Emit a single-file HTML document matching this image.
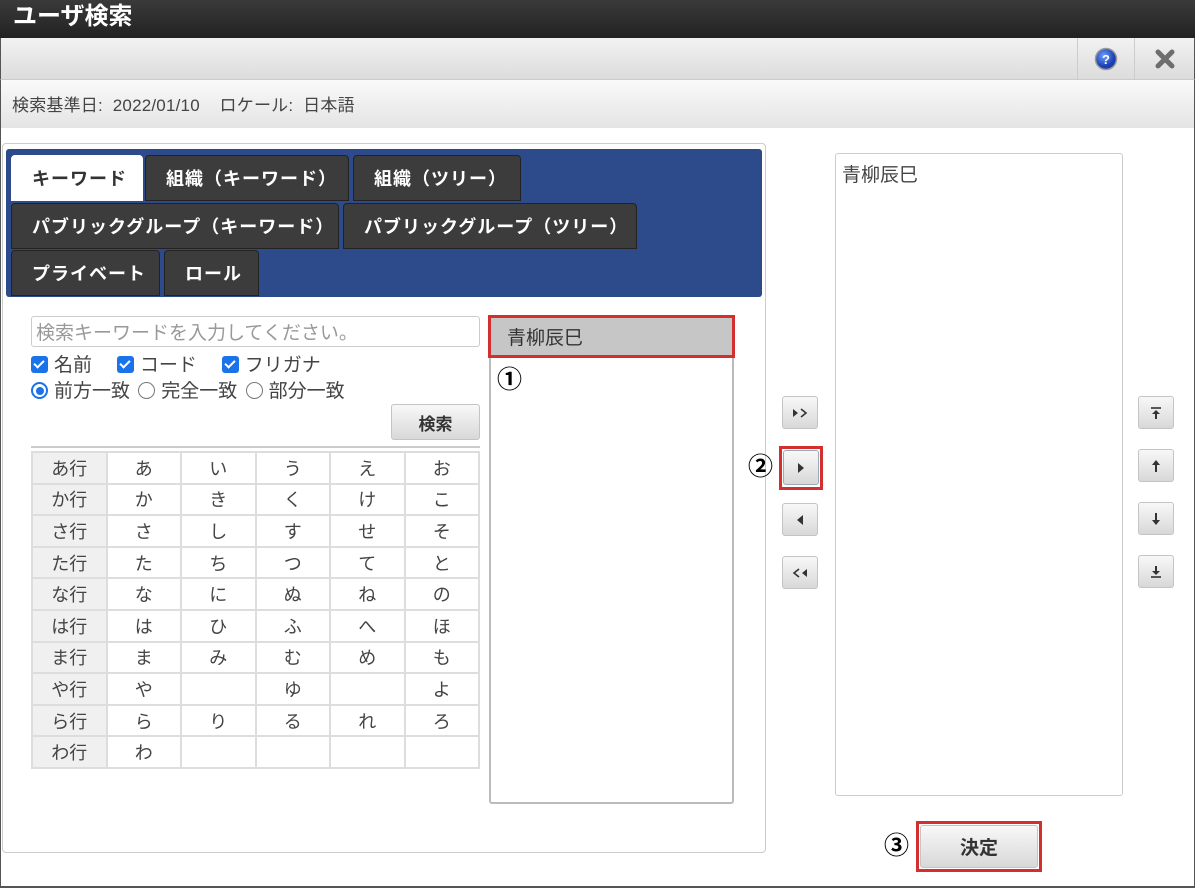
<!DOCTYPE html>
<html><head><meta charset="utf-8">
<style>
*{box-sizing:border-box;margin:0;padding:0}
body{width:1195px;height:888px;position:relative;background:#fff;font-family:"Liberation Sans","Noto Sans CJK JP",sans-serif;color:#333;overflow:hidden}
.a{position:absolute}
.title{left:0;top:0;width:1195px;height:38px;background:linear-gradient(#3a3a3a,#222);color:#fff;font-size:24px;font-weight:bold;padding:0 0 0 13px;line-height:34px}
.tool{left:0;top:38px;width:1195px;height:42px;background:linear-gradient(#f2f2f2,#dcdcdc);border-left:1px solid #555;border-right:1px solid #555;border-bottom:1px solid #ccc}
.tb{top:38px;width:57px;height:42px;border-left:1px solid #ccc;display:flex;align-items:center;justify-content:center}
.info{left:0;top:80px;width:1195px;height:48px;background:linear-gradient(#fafafa,#e4e4e4);border-left:1px solid #555;border-right:1px solid #555;font-size:17px;padding:11px 0 0 11px;color:#444;letter-spacing:0.2px}
.frame{left:0;top:128px;width:1195px;height:760px;border-left:1px solid #555;border-right:1px solid #555;border-bottom:2px solid #555}
.lp{left:2px;top:143px;width:764px;height:710px;border:1px solid #ccc;border-radius:4px}
.blue{left:6px;top:149px;width:756px;height:148px;background:#2d4b8b;border-radius:3px}
.tab{background:#3c3c3c;color:#fff;font-weight:bold;font-size:18px;letter-spacing:1px;border-radius:4px 4px 0 0;border:1px solid #222;display:flex;align-items:center;padding-left:20px;height:46px}
.tab.on{background:#fff;color:#333;border-color:#fff}
.inp{left:31px;top:316px;width:449px;height:31px;border:1px solid #ccc;border-radius:3px;font-size:19px;color:#999;padding:1px 4px}
.cb{display:inline-block;width:17px;height:17px;background:#1a73e8;border-radius:3px;vertical-align:-2px;position:relative;margin-right:6px}
.cb:after{content:"";position:absolute;left:5px;top:2px;width:4px;height:8px;border:solid #fff;border-width:0 2px 2px 0;transform:rotate(45deg)}
.rd{display:inline-block;width:17px;height:17px;border:1.5px solid #777;border-radius:50%;vertical-align:-2px;margin-right:6px;position:relative}
.rd.on{border:2px solid #1a73e8}
.rd.on:after{content:"";position:absolute;left:2.5px;top:2.5px;width:8px;height:8px;background:#1a73e8;border-radius:50%}
.btn{background:linear-gradient(#f8f8f8,#d8d8d8);border:1px solid #c4c4c4;border-radius:3px;display:flex;align-items:center;justify-content:center;font-weight:bold;color:#333}
table{border-collapse:collapse;position:absolute;left:31px;top:451px;width:449px}
td{border:2px solid #ddd;height:31.6px;text-align:center;font-size:18px;color:#444;width:75px;padding:0}
td.h{background:#f0f0f0;width:75px}
.list{border:1px solid #ccc;border-radius:3px}
.red{border:3px solid #d32f2f}
.num{font-size:25px;font-weight:bold;color:#000;line-height:1}
.sb{width:36px;height:33px}
.opt{font-size:19px;color:#444;word-spacing:3px}
</style></head><body>
<div class="a title">ユーザ検索</div>
<div class="a tool"></div>
<div class="a tb" style="left:1077px"><svg width="24" height="24"><defs><radialGradient id="g" cx="40%" cy="35%"><stop offset="0" stop-color="#6fa0ff"/><stop offset="1" stop-color="#1a3fb0"/></radialGradient></defs><circle cx="12" cy="12" r="10.5" fill="url(#g)" stroke="#999" stroke-width="1.5"/><text x="12" y="17" font-size="13" font-weight="bold" fill="#fff" text-anchor="middle" font-family="Liberation Sans">?</text></svg></div>
<div class="a tb" style="left:1134px;width:60px"><svg width="22" height="22"><path d="M4 4L18 18M18 4L4 18" stroke="#6e6e6e" stroke-width="5" stroke-linecap="round"/></svg></div>
<div class="a info">検索基準日:&nbsp; 2022/01/10 &nbsp;&nbsp; ロケール:&nbsp; 日本語</div>
<div class="a frame"></div>
<div class="a lp"></div>
<div class="a blue"></div>
<div class="a tab on" style="left:11px;top:155px;width:132px">キーワード</div>
<div class="a tab" style="left:145px;top:155px;width:204px">組織（キーワード）</div>
<div class="a tab" style="left:353px;top:155px;width:168px">組織（ツリー）</div>
<div class="a tab" style="left:11px;top:203px;width:328px">パブリックグループ（キーワード）</div>
<div class="a tab" style="left:343px;top:203px;width:294px">パブリックグループ（ツリー）</div>
<div class="a tab" style="left:11px;top:250px;width:149px">プライベート</div>
<div class="a tab" style="left:164px;top:250px;width:95px">ロール</div>
<div class="a inp">検索キーワードを入力してください。</div>
<div class="a opt" style="left:31px;top:350px"><span class="cb"></span>名前 &nbsp; <span class="cb"></span>コード &nbsp; <span class="cb"></span>フリガナ</div>
<div class="a opt" style="left:31px;top:376px"><span class="rd on"></span>前方一致 <span class="rd"></span>完全一致 <span class="rd"></span>部分一致</div>
<div class="a btn" style="left:391px;top:404px;width:89px;height:36px;font-size:17px">検索</div>
<div class="a" style="left:31px;top:446px;width:449px;height:2px;background:#ccc"></div>
<table>
<tr><td class="h">あ行</td><td>あ</td><td>い</td><td>う</td><td>え</td><td>お</td></tr>
<tr><td class="h">か行</td><td>か</td><td>き</td><td>く</td><td>け</td><td>こ</td></tr>
<tr><td class="h">さ行</td><td>さ</td><td>し</td><td>す</td><td>せ</td><td>そ</td></tr>
<tr><td class="h">た行</td><td>た</td><td>ち</td><td>つ</td><td>て</td><td>と</td></tr>
<tr><td class="h">な行</td><td>な</td><td>に</td><td>ぬ</td><td>ね</td><td>の</td></tr>
<tr><td class="h">は行</td><td>は</td><td>ひ</td><td>ふ</td><td>へ</td><td>ほ</td></tr>
<tr><td class="h">ま行</td><td>ま</td><td>み</td><td>む</td><td>め</td><td>も</td></tr>
<tr><td class="h">や行</td><td>や</td><td></td><td>ゆ</td><td></td><td>よ</td></tr>
<tr><td class="h">ら行</td><td>ら</td><td>り</td><td>る</td><td>れ</td><td>ろ</td></tr>
<tr><td class="h">わ行</td><td>わ</td><td></td><td></td><td></td><td></td></tr>
</table>
<div class="a list" style="left:489px;top:316px;width:245px;height:488px;border-color:#bbb;border-width:2px"></div>
<div class="a red" style="left:488px;top:315px;width:247px;height:43px;background:#c6c6c6;font-size:19px;padding:5px 0 0 16px;border-width:3px">青柳辰巳</div>
<div class="a num" style="left:497px;top:368px">①</div>

<div class="a btn sb" style="left:782px;top:396px"><svg width="16" height="10"><path d="M1 1L6 5L1 9Z" fill="#333"/><path d="M9 1L14 5L9 9" fill="none" stroke="#333" stroke-width="1.6"/></svg></div>
<div class="a red" style="left:779px;top:446px;width:44px;height:44px"></div>
<div class="a btn sb" style="left:783px;top:450px;width:36px;height:35px;border-color:#9ab"><svg width="8" height="10"><path d="M1 0L7 5L1 10Z" fill="#333"/></svg></div>
<div class="a btn sb" style="left:782px;top:503px"><svg width="8" height="10"><path d="M7 0L1 5L7 10Z" fill="#333"/></svg></div>
<div class="a btn sb" style="left:782px;top:556px"><svg width="16" height="10"><path d="M15 1L10 5L15 9Z" fill="#333"/><path d="M7 1L2 5L7 9" fill="none" stroke="#333" stroke-width="1.6"/></svg></div>
<div class="a num" style="left:748px;top:455px">②</div>

<div class="a list" style="left:835px;top:153px;width:288px;height:643px;font-size:19px;padding:6px 0 0 6px;color:#444">青柳辰巳</div>

<div class="a btn sb" style="left:1138px;top:396px"><svg width="10" height="12"><path d="M0 1H10" stroke="#333" stroke-width="1.6"/><path d="M5 3L9 7H6V12H4V7H1Z" fill="#333"/></svg></div>
<div class="a btn sb" style="left:1138px;top:449px"><svg width="10" height="12"><path d="M5 0L9 5H6V12H4V5H1Z" fill="#333"/></svg></div>
<div class="a btn sb" style="left:1138px;top:502px"><svg width="10" height="12"><path d="M5 12L9 7H6V0H4V7H1Z" fill="#333"/></svg></div>
<div class="a btn sb" style="left:1138px;top:555px"><svg width="10" height="12"><path d="M5 9L9 5H6V0H4V5H1Z" fill="#333"/><path d="M0 11H10" stroke="#333" stroke-width="1.6"/></svg></div>

<div class="a red" style="left:916px;top:821px;width:126px;height:51px"></div>
<div class="a btn" style="left:920px;top:825px;width:118px;height:43px;font-size:19px">決定</div>
<div class="a num" style="left:884px;top:834px">③</div>
</body></html>
